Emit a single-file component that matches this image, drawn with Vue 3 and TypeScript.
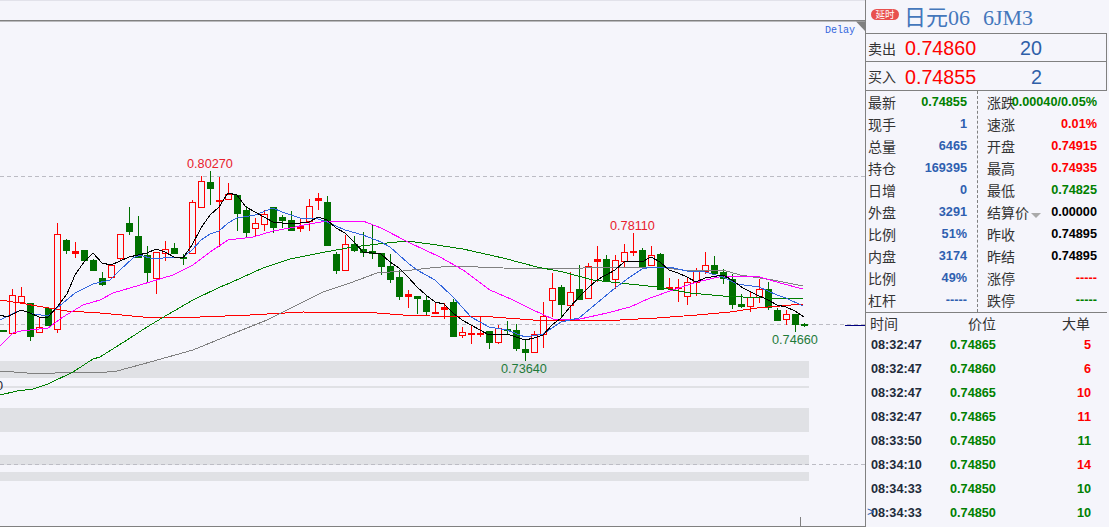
<script setup lang="ts">
// [dir, body top, body bottom, wick top, wick bottom], one bar every 9px from x=3.5
type Bar = [string, number, number, number, number];

const bars: Bar[] = [
  ['d', 330, 332, 330, 332], ['u', 295, 334, 289, 334], ['u', 296, 303, 287, 303], ['d', 303, 337, 303, 341],
  ['u', 327, 333, 317, 333], ['d', 308, 326, 308, 326], ['u', 234, 330, 223, 333], ['d', 240, 251, 239, 254],
  ['u', 251, 254, 242, 258], ['d', 250, 261, 250, 261], ['d', 260, 271, 259, 271], ['d', 278, 285, 272, 286],
  ['u', 265, 278, 265, 278], ['u', 234, 259, 234, 261], ['d', 223, 232, 207, 235], ['d', 236, 258, 216, 258],
  ['d', 255, 273, 246, 283], ['u', 252, 279, 252, 294], ['u', 249, 254, 241, 261], ['d', 248, 254, 243, 254],
  ['d', 257, 259, 254, 265], ['u', 202, 254, 200, 254], ['u', 181, 208, 176, 208], ['d', 182, 189, 171, 205],
  ['u', 200, 202, 177, 247], ['u', 194, 200, 183, 200], ['d', 195, 214, 195, 231], ['d', 210, 233, 206, 237],
  ['u', 223, 229, 218, 236], ['u', 214, 225, 210, 231], ['d', 207, 228, 207, 233], ['d', 217, 221, 215, 228],
  ['d', 220, 231, 211, 231], ['u', 226, 229, 219, 232], ['u', 206, 222, 199, 231], ['u', 198, 201, 193, 210],
  ['d', 202, 246, 196, 246], ['d', 254, 271, 252, 274], ['u', 244, 271, 235, 271], ['d', 244, 251, 236, 252],
  ['d', 249, 253, 232, 257], ['d', 251, 254, 224, 259], ['d', 253, 267, 253, 275], ['d', 266, 280, 254, 283],
  ['d', 277, 297, 270, 300], ['u', 294, 297, 290, 308], ['d', 296, 299, 296, 314], ['d', 300, 312, 295, 316],
  ['u', 312, 314, 302, 314], ['u', 307, 310, 303, 319], ['d', 302, 337, 299, 337], ['u', 332, 336, 327, 338],
  ['u', 333, 335, 325, 344], ['u', 333, 335, 317, 337], ['d', 331, 343, 331, 349], ['u', 328, 343, 325, 344],
  ['d', 329, 331, 321, 335], ['d', 330, 349, 324, 351], ['d', 349, 353, 339, 361], ['u', 334, 353, 331, 353],
  ['u', 316, 335, 302, 348], ['u', 288, 301, 273, 317], ['d', 287, 305, 285, 317], ['u', 292, 306, 272, 319],
  ['d', 289, 300, 265, 300], ['u', 266, 299, 263, 299], ['u', 259, 262, 246, 282], ['d', 259, 281, 255, 282],
  ['u', 260, 280, 255, 289], ['u', 252, 262, 244, 267], ['u', 251, 253, 233, 256], ['d', 250, 267, 248, 269],
  ['u', 255, 266, 246, 266], ['d', 254, 290, 253, 290], ['u', 287, 289, 278, 290], ['u', 287, 289, 279, 302],
  ['u', 282, 297, 278, 305], ['u', 271, 283, 268, 296], ['u', 265, 272, 252, 274], ['d', 265, 274, 256, 274],
  ['d', 272, 279, 269, 284], ['d', 279, 305, 274, 309], ['d', 304, 307, 294, 308], ['u', 297, 307, 291, 312],
  ['u', 289, 298, 279, 303], ['d', 289, 308, 282, 310], ['d', 310, 321, 308, 321], ['u', 314, 320, 310, 325],
  ['d', 314, 325, 314, 332], ['d', 324, 326, 323, 327]
];

const candles = bars.map((b, i) => {
  const x = 3.5 + 9 * i;
  return { x, up: b[0] === 'u', top: b[1], bottom: b[2], high: b[3], low: b[4], doji: b[2] - b[1] <= 3 };
});

const averages = [
  {
    color: '#ff0000',
    points: '0,300 20,303 43,307 67,311 100,313 143,317 200,317 250,315 303,312 377,313 403,315 430,316 493,317 533,320 620,320 657,318 697,315 730,312 757,308 803,304'
  },
  {
    color: '#808080',
    points: '0,371 27,373 43,374 67,372 98,373 117,371 143,364 193,350 210,343 237,332 267,320 297,305 323,292 350,283 377,273 403,271 430,268 453,266 503,268 563,269 603,267 657,267 683,270 723,270 740,275 773,280 803,286'
  },
  {
    color: '#007f00',
    points: '0,395 17,391 33,389 48,384 73,372 93,359 100,357 127,340 147,327 167,315 193,300 220,287 230,283 263,268 290,259 320,253 353,247 387,243 407,241 430,244 463,249 503,258 537,267 563,272 593,280 620,283 657,287 690,293 723,296 763,298 803,299'
  },
  {
    color: '#ff00ff',
    points: '0,346 13,333 21,331 48,328 63,317 83,305 100,300 113,293 140,285 173,275 193,265 210,252 228,240 253,237 273,231 290,228 309,224 327,221 363,221 381,228 410,243 440,257 463,270 490,290 513,300 533,310 553,319 580,319 607,313 630,307 650,298 673,290 697,282 723,276 760,277 780,283 803,289'
  },
  {
    color: '#3366dd',
    points: '0,320 10,315 21,310 33,314 48,316 57,308 75,293 93,284 110,280 120,270 133,258 140,255 153,259 174,257 183,257 192,250 201,240 210,234 219,231 228,223 237,218 255,215 273,208 282,212 300,218 318,219 327,222 345,230 363,235 381,242 390,247 408,263 417,270 435,280 453,297 471,317 489,327 507,330 525,337 543,334 561,322 579,318 597,303 615,288 630,277 642,269 651,267 669,267 687,271 705,272 723,277 737,284 759,287 777,295 786,298 803,306'
  },
  {
    color: '#000000',
    points: '0,315 7,317 21,310 30,313 39,317 48,317 57,307 67,294 75,275 84,262 93,253 102,263 111,265 120,261 129,257 138,255 147,253 156,249 165,252 174,257 183,258 192,245 201,228 210,215 219,207 228,193 237,195 246,207 255,212 264,217 273,222 282,223 291,223 300,223 309,222 318,217 327,220 336,228 345,233 354,242 363,252 372,253 381,254 390,262 399,268 408,277 417,287 426,295 435,302 444,304 453,313 462,320 471,325 480,330 489,335 498,334 507,334 516,337 525,340 534,338 543,335 552,325 561,318 570,307 579,297 588,288 597,280 606,275 615,270 624,262 633,261 642,262 651,257 660,262 669,270 678,273 687,277 696,282 705,278 723,275 732,280 743,288 757,295 768,300 777,305 786,307 795,311 804,317'
  }
];

const bands = [
  { y: 361, h: 17 },
  { y: 386, h: 2 },
  { y: 408, h: 24 },
  { y: 455, h: 10 },
  { y: 472, h: 9 }
];

const priceLabels = [
  { x: 187, y: 168, text: '0.80270', cls: 'label-up' },
  { x: 610, y: 230, text: '0.78110', cls: 'label-up' },
  { x: 501, y: 373, text: '0.73640', cls: 'label-down' },
  { x: 772, y: 344, text: '0.74660', cls: 'label-down' }
];

const leftStats = [
  { label: '最新', value: '0.74855', cls: 'green' },
  { label: '现手', value: '1', cls: 'blue' },
  { label: '总量', value: '6465', cls: 'blue' },
  { label: '持仓', value: '169395', cls: 'blue' },
  { label: '日增', value: '0', cls: 'blue' },
  { label: '外盘', value: '3291', cls: 'blue' },
  { label: '比例', value: '51%', cls: 'blue' },
  { label: '内盘', value: '3174', cls: 'blue' },
  { label: '比例', value: '49%', cls: 'blue' },
  { label: '杠杆', value: '-----', cls: 'blue' }
];

const rightStats = [
  { label: '涨跌', value: '0.00040/0.05%', cls: 'green' },
  { label: '速涨', value: '0.01%', cls: 'red' },
  { label: '开盘', value: '0.74915', cls: 'red' },
  { label: '最高', value: '0.74935', cls: 'red' },
  { label: '最低', value: '0.74825', cls: 'green' },
  { label: '结算价', value: '0.00000', cls: 'black', caret: true },
  { label: '昨收', value: '0.74895', cls: 'black' },
  { label: '昨结', value: '0.74895', cls: 'black' },
  { label: '涨停', value: '-----', cls: 'red' },
  { label: '跌停', value: '-----', cls: 'green' }
];

const ticks = [
  { time: '08:32:47', price: '0.74865', size: 5, cls: 'red' },
  { time: '08:32:47', price: '0.74860', size: 6, cls: 'red' },
  { time: '08:32:47', price: '0.74865', size: 10, cls: 'red' },
  { time: '08:32:47', price: '0.74865', size: 11, cls: 'red' },
  { time: '08:33:50', price: '0.74850', size: 11, cls: 'green' },
  { time: '08:34:10', price: '0.74850', size: 14, cls: 'red' },
  { time: '08:34:33', price: '0.74850', size: 10, cls: 'green' },
  { time: '08:34:33', price: '0.74850', size: 10, cls: 'green' }
];
</script>

<template>
  <div class="terminal">
    <div class="chart">
      <svg class="chart-svg" width="865" height="527" viewBox="0 0 865 527">
        <rect x="0" y="0" width="865" height="1" fill="#e2e2ea" />
        <rect x="0" y="20" width="865" height="1.5" fill="#808080" />
        <polygon points="856,21.5 865,21.5 865,31" fill="#808080" />
        <text x="825" y="33" class="delay">Delay</text>

        <rect v-for="b in bands" :key="b.y" x="0" :y="b.y" width="809" :height="b.h" fill="#e0e1e5" />

        <line x1="0" y1="176.5" x2="865" y2="176.5" class="dash" />
        <line x1="0" y1="324.5" x2="865" y2="324.5" class="dash" />
        <line x1="0" y1="464.5" x2="865" y2="464.5" class="dash" />

        <g class="crisp">
          <g v-for="c in candles" :key="c.x">
            <line :x1="c.x" :y1="c.high" :x2="c.x" :y2="c.low" :stroke="c.up ? '#ff0000' : '#007000'" />
            <rect
              v-if="c.doji || !c.up"
              :x="c.x - 3.5"
              :y="c.top"
              width="7"
              :height="c.bottom - c.top"
              :fill="c.up ? '#ff0000' : '#007000'"
            />
            <rect
              v-else
              :x="c.x - 3"
              :y="c.top + 0.5"
              width="6"
              :height="c.bottom - c.top - 1"
              fill="#f5f5fb"
              stroke="#ff0000"
            />
          </g>
          <polyline v-for="a in averages" :key="a.color" :points="a.points" :stroke="a.color" fill="none" />
        </g>

        <text v-for="p in priceLabels" :key="p.text" :x="p.x" :y="p.y" :class="p.cls">{{ p.text }}</text>
        <text x="-4" y="390" class="axis-num">0</text>

        <rect x="845" y="325" width="20" height="1" fill="#000080" />
        <rect x="0" y="526" width="865" height="1" fill="#808080" />
        <rect x="800" y="517" width="1" height="9" fill="#808080" />
      </svg>
    </div>

    <div class="panel">
      <div class="title-row">
        <span class="badge">延时</span>
        <span class="title">日元06&nbsp;&nbsp;6JM3</span>
      </div>

      <div class="quote-row ask">
        <span class="label">卖出</span>
        <span class="quote-price">0.74860</span>
        <span class="quote-size">20</span>
      </div>
      <div class="quote-row bid">
        <span class="label">买入</span>
        <span class="quote-price">0.74855</span>
        <span class="quote-size">2</span>
      </div>

      <div class="stats">
        <div class="stats-col left-col">
          <div v-for="s in leftStats" :key="s.label + s.value" class="stat">
            <span class="label">{{ s.label }}</span>
            <span class="num" :class="s.cls">{{ s.value }}</span>
          </div>
        </div>
        <div class="stats-col right-col">
          <div v-for="s in rightStats" :key="s.label" class="stat">
            <span class="label">{{ s.label }}<i v-if="s.caret" class="caret"></i></span>
            <span class="num" :class="s.cls">{{ s.value }}</span>
          </div>
        </div>
      </div>

      <div class="tick-head">
        <span class="label col-time">时间</span>
        <span class="label col-price">价位</span>
        <span class="label col-size">大单</span>
      </div>
      <div v-for="(t, i) in ticks" :key="i" class="tick">
        <span class="num col-time time">
          <span v-if="i === ticks.length - 1" class="cursor">&gt;</span>{{ t.time }}
        </span>
        <span class="num col-price green">{{ t.price }}</span>
        <span class="num col-size" :class="t.cls">{{ t.size }}</span>
      </div>
    </div>
  </div>
</template>

<style>
html,
body {
  margin: 0;
  background: #f5f5fb;
  overflow: hidden;
}
</style>

<style scoped>
.terminal {
  display: flex;
  width: 1109px;
  height: 527px;
  background: #f5f5fb;
  font-family: "Liberation Sans", "Noto Sans CJK SC", sans-serif;
}

.chart {
  flex: none;
  width: 865px;
  height: 527px;
}

.chart-svg {
  display: block;
}

.crisp {
  shape-rendering: crispEdges;
}

.dash {
  stroke: #bcbcc4;
  stroke-dasharray: 4 3;
  shape-rendering: crispEdges;
}

.delay {
  font-family: "Liberation Mono", monospace;
  font-size: 10px;
  fill: #3366dd;
}

.label-up,
.label-down,
.axis-num {
  font-family: "Liberation Sans", sans-serif;
  font-size: 12.7px;
}

.label-up {
  fill: #e8202c;
}

.label-down {
  fill: #1f7a3a;
}

.axis-num {
  fill: #223;
}

.panel {
  flex: none;
  width: 241px;
  margin-right: 2px;
  border-left: 1px solid #808080;
}

.title-row {
  display: flex;
  align-items: center;
  height: 33px;
  padding-left: 5px;
  border-bottom: 1px solid #808080;
}

.badge {
  width: 28px;
  height: 11px;
  margin-top: -5px;
  border-radius: 6px;
  background: #e8504e;
  color: #fff;
  font-family: "Noto Sans CJK SC", sans-serif;
  font-size: 9.5px;
  line-height: 11px;
  text-align: center;
}

.title {
  margin-top: 2px;
  margin-left: 5px;
  color: #4477bb;
  font-family: "Liberation Serif", "Noto Sans CJK SC", serif;
  font-size: 22px;
  line-height: 33px;
  word-spacing: 1px;
  white-space: nowrap;
}

.quote-row {
  display: flex;
  align-items: center;
  padding-left: 2px;
  border-bottom: 1px solid #808080;
  border-right: 1px solid #808080;
}

.ask {
  height: 27px;
}

.bid {
  height: 28px;
}

.label {
  color: #333;
  font-family: "Noto Sans CJK SC", sans-serif;
  font-size: 14px;
  line-height: 20px;
  white-space: nowrap;
}

.quote-price {
  width: 71px;
  margin-top: 2px;
  margin-left: 9px;
  color: #ff0000;
  font-size: 19.7px;
}

.quote-size {
  width: 66px;
  margin-top: 2px;
  color: #2f5fa8;
  font-size: 19.7px;
  text-align: right;
}

.stats {
  display: flex;
  height: 221px;
  border-bottom: 1px solid #808080;
}

.stats-col {
  display: flex;
  flex-direction: column;
  box-sizing: border-box;
}

.left-col {
  flex: none;
  width: 112px;
  padding: 0 10px 0 2px;
  border-right: 1px dashed #808080;
}

.right-col {
  flex: none;
  width: 129px;
  padding: 0 10px 0 9px;
}

.stat {
  display: flex;
  align-items: center;
  height: 22px;
  white-space: nowrap;
}

/* value may run under the label, as 涨跌 does */
.stat .label {
  flex: none;
  margin-right: -20px;
}

.stat .num {
  flex: none;
  margin-left: auto;
}

.num {
  font-size: 12.7px;
  font-weight: 700;
}

.caret {
  display: inline-block;
  width: 0;
  height: 0;
  margin-left: 2px;
  border-left: 5px solid transparent;
  border-right: 5px solid transparent;
  border-top: 5px solid #aaa;
  vertical-align: 0;
}

.green {
  color: #008000;
}

.red {
  color: #ff0000;
}

.blue {
  color: #2f5fb0;
}

.black {
  color: #000;
}

.tick-head,
.tick {
  display: flex;
  align-items: center;
}

.tick-head {
  height: 20px;
}

.tick {
  height: 24px;
}

.col-time {
  position: relative;
  flex: none;
  width: 79px;
  white-space: nowrap;
}

.tick-head .col-time {
  margin-left: 4px;
}

.tick .col-time {
  margin-left: 5px;
}

.col-price {
  flex: none;
  width: 87px;
}

.col-size {
  flex: none;
  width: 54px;
  text-align: right;
}

.tick-head .col-price {
  width: 68px;
  padding-left: 19px;
}

.time {
  color: #222b3a;
}

.cursor {
  position: absolute;
  left: -4px;
  top: -1px;
  color: #2f5fb0;
  font-weight: 400;
}
</style>
